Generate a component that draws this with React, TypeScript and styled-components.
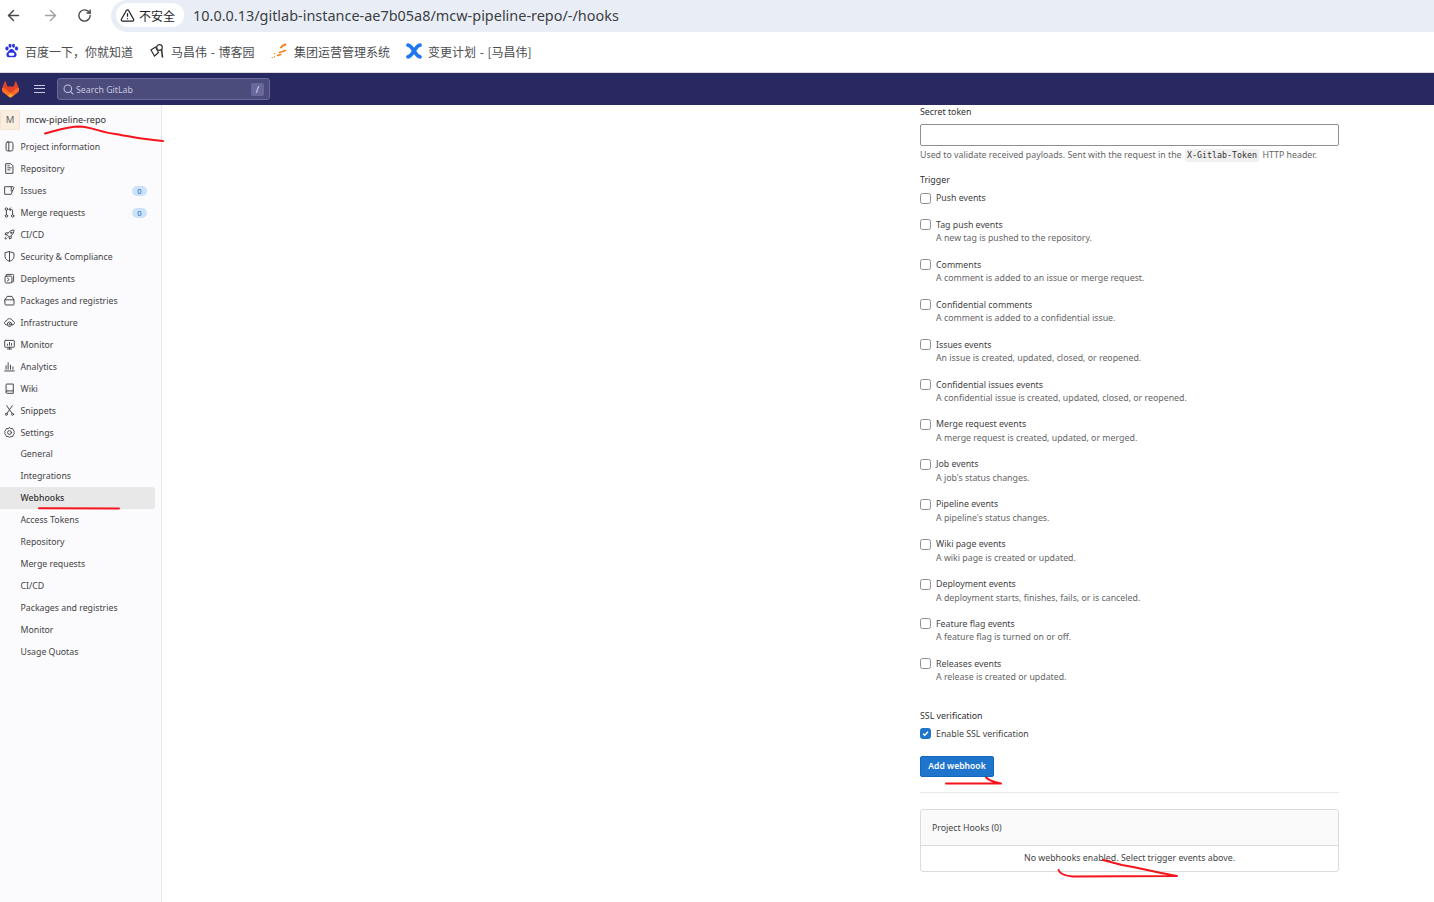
import React from "react";
import styled, { createGlobalStyle } from "styled-components";
import { ArrowLeft, ArrowRight, RotateCw, TriangleAlert } from "lucide-react";

const Global = createGlobalStyle`
  html, body {
    margin: 0;
    height: 902px;
    overflow: hidden;
    background: white;
    font-family: "Noto Sans", "Noto Sans CJK SC", sans-serif;
  }
  * { box-sizing: border-box; }
`;

const Page = styled.div`
  position: relative;
  width: 1434px;
  height: 902px;
  overflow: hidden;
  display: flex;
  flex-direction: column;
`;
const AddressRow = styled.div`
  height: 32px;
  display: flex;
  align-items: center;
  padding-left: 5px;
`;
const NavButton = styled.div<{ $dim?: boolean }>`
  width: 36px;
  display: flex;
  margin-bottom: 2px;
  padding-left: ${(p) => (p.$dim ? "1px" : "0")};
  color: ${(p) => (p.$dim ? "#a0a2a6" : "#45474a")};
`;
const Omnibox = styled.div`
  flex: 1;
  height: 32px;
  margin-left: -2px;
  background: #e9eef6;
  border-radius: 16px 0 0 16px;
  display: flex;
  align-items: center;
  padding: 0 0 2px 5px;
`;
const SecurityChip = styled.div`
  height: 24px;
  width: 68px;
  background: white;
  border-radius: 12px;
  display: flex;
  align-items: center;
  padding-left: 4px;
  gap: 4px;
  font-size: 12px;
  color: #202124;
  font-family: "Noto Sans CJK SC", sans-serif;
`;
const Url = styled.div`
  margin-left: 9px;
  font-family: "Noto Sans", sans-serif;
  font-size: 14.45px;
  color: #3c4043;
`;
const BookmarkBar = styled.div`
  height: 41px;
  display: flex;
  align-items: center;
  padding: 0 0 2px 4px;
  border-bottom: 1px solid #dcdcdc;
`;
const Bookmark = styled.div<{ $width: number }>`
  width: ${(p) => p.$width}px;
  display: flex;
  align-items: center;
  gap: 6px;
  font-family: "Noto Sans CJK SC", sans-serif;
  font-size: 12px;
  word-spacing: 1px;
  color: #4a4c50;
  white-space: nowrap;
`;
const Navbar = styled.div`
  height: 32px;
  background: #292961;
  display: flex;
  align-items: center;
  padding-left: 2px;
`;
const Burger = styled.div`
  margin-left: 15px;
  width: 11px;
  height: 8px;
  border-top: 1.3px solid #c9c9e0;
  border-bottom: 1.3px solid #c9c9e0;
  position: relative;
  &::after {
    content: "";
    position: absolute;
    left: 0;
    right: 0;
    top: 2px;
    border-top: 1.3px solid #c9c9e0;
  }
`;
const SearchBox = styled.div`
  margin-left: 12px;
  width: 213px;
  height: 22px;
  background: #4b4b7c;
  border: 1px solid #6a6a9c;
  border-radius: 3px;
  display: flex;
  align-items: center;
  padding: 0 5px 0 5px;
  gap: 2px;
  color: #c6c6de;
  font-size: 8.8px;
`;
const SearchLabel = styled.span`
  flex: 1;
  padding-top: 1px;
`;
const SlashKey = styled.span`
  width: 13px;
  height: 13px;
  background: #68689a;
  border-radius: 2px;
  text-align: center;
  line-height: 13px;
  font-size: 9px;
  color: #e4e4f0;
`;
const Body = styled.div`
  flex: 1;
  display: flex;
  min-height: 0;
`;
const Sidebar = styled.aside`
  width: 162px;
  background: #fbfafd;
  border-right: 1px solid #e9e9e9;
  padding-top: 5px;
  color: #444;
  font-size: 8.75px;
`;
const ContextRow = styled.div`
  height: 25.5px;
  display: flex;
  align-items: flex-start;
  gap: 6px;
  font-size: 9.15px;
  color: #303030;
`;
const Avatar = styled.div`
  width: 20px;
  height: 20px;
  background: #fbeee0;
  border: 1px solid #f3e4d2;
  border-radius: 2px;
  text-align: center;
  line-height: 18px;
  font-size: 9.5px;
  color: #666;
`;
const ContextName = styled.span`
  line-height: 19px;
`;
const NavRow = styled.div`
  height: 22px;
  display: flex;
  align-items: center;
  padding-left: 4px;
  gap: 5.5px;
  width: 155px;
`;
const IconBox = styled.svg`
  width: 11px;
  height: 11px;
  flex: none;
  fill: none;
  stroke: #444;
  stroke-width: 1.4;
  stroke-linecap: round;
  stroke-linejoin: round;
`;
const NavLabel = styled.span`
  flex: 1;
`;
const Badge = styled.span`
  width: 15px;
  height: 10px;
  margin-right: 8px;
  border-radius: 5px;
  background: #cbe2f9;
  color: #1068bf;
  font-size: 7.5px;
  line-height: 10px;
  text-align: center;
`;
const SubList = styled.div`
  margin-top: -0.5px;
`;
const SubRow = styled.div<{ $active?: boolean }>`
  height: 22px;
  width: 155px;
  display: flex;
  align-items: center;
  padding-left: 20.5px;
  border-radius: 0 3px 3px 0;
  background: ${(p) => (p.$active ? "#e8e8e9" : "transparent")};
  color: ${(p) => (p.$active ? "#303030" : "#444")};
  font-weight: ${(p) => (p.$active ? 500 : 400)};
`;
const Main = styled.main`
  flex: 1;
  padding-left: 758px;
  color: #303030;
  font-size: 8.8px;
`;
const Form = styled.div`
  width: 419px;
`;
const FieldLabel = styled.div<{ $top?: number }>`
  line-height: 14px;
  margin-top: ${(p) => p.$top ?? 0}px;
  color: #303030;
`;
const TextInput = styled.div`
  height: 22px;
  margin-top: 5px;
  border: 1px solid #8f8f8f;
  border-radius: 2px;
  background: white;
`;
const HelpText = styled.div`
  line-height: 13.45px;
  color: #666;
`;
const TokenHelp = styled(HelpText)`
  margin-top: 3px;
  display: flex;
  align-items: center;
  gap: 3px;
`;
const Code = styled.code`
  font-family: "DejaVu Sans Mono", monospace;
  font-size: 8.3px;
  background: #f0f0f0;
  border-radius: 2px;
  color: #303030;
  padding: 0 2.5px;
`;
const TriggerList = styled.div`
  margin-top: 5px;
`;
const CheckRow = styled.div<{ $gap?: number }>`
  display: grid;
  grid-template-columns: 11px 1fr;
  column-gap: 5px;
  align-items: center;
  margin-bottom: ${(p) => p.$gap ?? 13}px;
`;
const CheckLabel = styled.div`
  line-height: 13.45px;
  color: #3f3f3f;
`;
const Box = styled.span<{ $checked?: boolean }>`
  width: 11px;
  height: 11px;
  margin-bottom: 1.5px;
  border-radius: 2.5px;
  border: 1px solid ${(p) => (p.$checked ? "#1f75cb" : "#8f8f8f")};
  background: ${(p) => (p.$checked ? "#1f75cb" : "white")};
  display: flex;
  align-items: center;
  justify-content: center;
`;
const Help = styled(HelpText)`
  grid-column: 2;
`;
const AddButton = styled.div`
  margin-top: 15px;
  width: 74px;
  height: 21px;
  background: #1f75cb;
  border: 1px solid #1068bf;
  border-radius: 2px;
  color: white;
  font-weight: 600;
  font-size: 8.6px;
  line-height: 19px;
  text-align: center;
`;
const Divider = styled.div`
  margin-top: 15px;
  border-top: 1px solid #e9e9e9;
`;
const Card = styled.div`
  margin-top: 16px;
  height: 63px;
  border: 1px solid #dbdbdb;
  border-radius: 3px;
  overflow: hidden;
`;
const CardHeader = styled.div`
  height: 36px;
  background: #fafafa;
  border-bottom: 1px solid #dbdbdb;
  padding-left: 11px;
  line-height: 36px;
  color: #444;
`;
const CardBody = styled.div`
  height: 26px;
  line-height: 25px;
  text-align: center;
  color: #444;
`;
const Scribbles = styled.svg`
  position: absolute;
  left: 0;
  top: 0;
  width: 1434px;
  height: 902px;
  pointer-events: none;
  fill: none;
  stroke: #f5141c;
  stroke-width: 2;
  stroke-linecap: round;
  stroke-linejoin: round;
`;

const icons: Record<string, React.ReactNode> = {
  project: (
    <>
      <rect x="3" y="1.5" width="10" height="13" rx="2.5" />
      <path d="M7 1.8v12.4" />
    </>
  ),
  repository: (
    <>
      <path d="M3 1h7l3 3v11H3z" />
      <path d="M5.5 7h5M5.5 10h3M5.5 4h2" />
    </>
  ),
  issues: (
    <>
      <path d="M1.5 2.5h12l1 1-4 10h-9z" />
      <path d="M10.5 3v6" />
    </>
  ),
  merge: (
    <>
      <circle cx="3.5" cy="3" r="1.8" />
      <circle cx="3.5" cy="13" r="1.8" />
      <circle cx="12.5" cy="13" r="1.8" />
      <path d="M3.5 5v6M12.5 11V5.5a2 2 0 0 0-2-2H8M9.5 1.2 7.5 3.5l2 2" />
    </>
  ),
  cicd: (
    <>
      <path d="M6 6c2-3 5-4.500 8.500-4.500C14.500 5 13 8 10 10L7.500 11.500 4.500 8.500z" />
      <circle cx="10.500" cy="5.500" r="1" />
      <path d="M5 5.500H2.500L1.500 8l2.500.5M10.500 11v2.500L8 14.500 7.500 12M3 11c-1 .8-1.500 2-1.500 3.500 1.500 0 2.700-.5 3.500-1.500" />
    </>
  ),
  security: (
    <>
      <path d="M8 1 14.500 3v5c0 3.500-3 6-6.500 7C4.500 14 1.500 11.500 1.500 8V3z" />
      <path d="M8 1.500V14.500" />
    </>
  ),
  deployments: (
    <>
      <path d="M3 5V3.500A1.500 1.500 0 0 1 4.500 2h8A1.500 1.500 0 0 1 14 3.500v8a1.500 1.500 0 0 1-1.500 1.500H11" />
      <rect x="1.500" y="4.500" width="10" height="10" rx="2" />
      <path d="M5 7.500 7.500 9.500 5 11.500" />
    </>
  ),
  packages: (
    <>
      <path d="M1.500 7h13v6.500a1 1 0 0 1-1 1h-11a1 1 0 0 1-1-1z" />
      <path d="M1.500 7 4.500 2h7l3 5" />
    </>
  ),
  infrastructure: (
    <>
      <path d="M4 11.500C2 11.500.8 10 .8 8.500 .8 7 2 5.800 3.500 5.800 4.200 3.500 6 2.500 8 2.500c2.500 0 4.300 1.700 4.700 3.500 1.500.2 2.500 1.300 2.500 2.700s-1 2.800-3 2.800" />
      <circle cx="8" cy="10.500" r="3.200" />
      <circle cx="8" cy="10.500" r=".8" />
    </>
  ),
  monitor: (
    <>
      <rect x="1" y="2" width="14" height="10" rx="1" />
      <path d="M5 14.500h6M8 12v2.500M5 9V7.500M8 9V5M11 9V6.500" />
    </>
  ),
  analytics: <path d="M1 14.500h14M3 12V7M6 12V2.500M9.500 12V6M13 12V8.500" />,
  wiki: (
    <>
      <path d="M3 13V2.500A1 1 0 0 1 4 1.500h9.500v10H4.500" />
      <path d="M13.500 11.500v3.500H4.500A1.500 1.500 0 0 1 3 13.500a2 2 0 0 1 1.500-2" />
    </>
  ),
  snippets: (
    <>
      <path d="M4 1 11.500 12M12 1 4.500 12" />
      <circle cx="3.500" cy="13.500" r="1.500" />
      <circle cx="12.500" cy="13.500" r="1.500" />
    </>
  ),
  settings: (
    <>
      <path d="M8 1 10 2.300 12.500 2.200 13.500 4.500 15 6.500 14.500 8 15 9.500 13.500 11.500 12.500 13.800 10 13.700 8 15 6 13.700 3.500 13.800 2.500 11.500 1 9.500 1.500 8 1 6.500 2.500 4.500 3.500 2.200 6 2.300z" />
      <circle cx="8" cy="8" r="2.800" />
    </>
  ),
};

const NavIcon = ({ name }: { name: string }) => (
  <IconBox viewBox="0 0 16 16">{icons[name]}</IconBox>
);

const mainNav = [
  { icon: "project", label: "Project information" },
  { icon: "repository", label: "Repository" },
  { icon: "issues", label: "Issues", badge: "0" },
  { icon: "merge", label: "Merge requests", badge: "0" },
  { icon: "cicd", label: "CI/CD" },
  { icon: "security", label: "Security & Compliance" },
  { icon: "deployments", label: "Deployments" },
  { icon: "packages", label: "Packages and registries" },
  { icon: "infrastructure", label: "Infrastructure" },
  { icon: "monitor", label: "Monitor" },
  { icon: "analytics", label: "Analytics" },
  { icon: "wiki", label: "Wiki" },
  { icon: "snippets", label: "Snippets" },
  { icon: "settings", label: "Settings" },
];

const subNav = [
  "General",
  "Integrations",
  "Webhooks",
  "Access Tokens",
  "Repository",
  "Merge requests",
  "CI/CD",
  "Packages and registries",
  "Monitor",
  "Usage Quotas",
];

const triggers = [
  ["Tag push events", "A new tag is pushed to the repository."],
  ["Comments", "A comment is added to an issue or merge request."],
  ["Confidential comments", "A comment is added to a confidential issue."],
  ["Issues events", "An issue is created, updated, closed, or reopened."],
  ["Confidential issues events", "A confidential issue is created, updated, closed, or reopened."],
  ["Merge request events", "A merge request is created, updated, or merged."],
  ["Job events", "A job's status changes."],
  ["Pipeline events", "A pipeline's status changes."],
  ["Wiki page events", "A wiki page is created or updated."],
  ["Deployment events", "A deployment starts, finishes, fails, or is canceled."],
  ["Feature flag events", "A feature flag is turned on or off."],
  ["Releases events", "A release is created or updated."],
];

const BaiduIcon = () => (
  <svg width="15" height="16" viewBox="0 0 15 16">
    <g fill="#2932e1">
      <ellipse cx="3" cy="5.500" rx="1.600" ry="2" />
      <ellipse cx="6" cy="2.800" rx="1.500" ry="2" />
      <ellipse cx="9.500" cy="2.800" rx="1.500" ry="2" />
      <ellipse cx="12.500" cy="5.500" rx="1.600" ry="2" />
      <path d="M7.500 6C5.500 6 4.800 8 3.500 9.200 2 10.500 1.800 13.800 4.500 14.300c1.200.2 2-.3 3-.3s1.800.5 3 .3c2.700-.5 2.500-3.800 1-5.100C10.200 8 9.500 6 7.500 6z" />
    </g>
    <rect x="4.800" y="9.800" width="5.400" height="3" rx="1" fill="#fff" />
  </svg>
);

const BlogIcon = () => (
  <svg width="15" height="16" viewBox="0 0 15 16" fill="none" stroke="#333" strokeWidth="1.200">
    <path d="M1 7 4.500 13 8.500 9.500 5.500 4z" />
    <circle cx="9.500" cy="4.500" r="2.800" />
    <path d="M11.500 6 12.500 14.500" strokeWidth="1.600" />
  </svg>
);

const DashIcon = () => (
  <svg width="17" height="16" viewBox="0 0 17 16" fill="none" stroke="#f0851e" strokeLinecap="round">
    <path d="M10 4.500C11 3 12.500 2 14.500 1.500" strokeWidth="2" />
    <path d="M8.500 9.500 14.500 7.500" strokeWidth="1.800" />
    <path d="M6.500 12.500 10 11.500" strokeWidth="1.400" />
    <path d="M1 14.500h.4M3.500 13.500v.4M3.500 10.500v.4" strokeWidth="1.100" />
  </svg>
);

const CrossIcon = () => (
  <svg width="16" height="16" viewBox="0 0 16 16" fill="none" stroke="#1f78f0" strokeWidth="3.800" strokeLinecap="round">
    <path d="M2 2.200C6.500 2.500 9.500 13.500 14 13.800" />
    <path d="M14 2.200C9.500 2.500 6.500 13.500 2 13.800" />
  </svg>
);

const GitlabLogo = () => (
  <svg width="17" height="17" viewBox="0 0 25 24">
    <path fill="#e24329" d="M24.507 9.500l-.034-.090L21.082.562a.896.896 0 00-1.694.091l-2.290 7.010H7.825L5.535.653a.898.898 0 00-1.694-.090L.451 9.411.416 9.500a6.297 6.297 0 002.090 7.278l.012.010.030.022 5.160 3.867 2.560 1.935 1.554 1.176a1.051 1.051 0 001.268 0l1.555-1.176 2.560-1.935 5.197-3.890.014-.010A6.297 6.297 0 0024.507 9.500z" />
    <path fill="#fc6d26" d="M24.507 9.500l-.034-.090a11.440 11.440 0 00-4.560 2.051l-7.447 5.632 4.742 3.584 5.197-3.890.014-.010A6.297 6.297 0 0024.507 9.500z" />
    <path fill="#fca326" d="M7.707 20.677l2.560 1.935 1.555 1.176a1.051 1.051 0 001.268 0l1.555-1.176 2.560-1.935-4.743-3.584-4.755 3.584z" />
    <path fill="#fc6d26" d="M5.010 11.461a11.430 11.430 0 00-4.560-2.050L.416 9.500a6.297 6.297 0 002.090 7.278l.012.010.030.022 5.160 3.867 4.745-3.584-7.444-5.632z" />
  </svg>
);

const SearchGlyph = () => (
  <svg width="11" height="11" viewBox="0 0 16 16" fill="none" stroke="#c6c6de" strokeWidth="1.500">
    <circle cx="7" cy="7" r="5.500" />
    <path d="M11 11l4 4" />
  </svg>
);

function App() {
  return (
    <Page>
      <Global />
      <AddressRow>
        <NavButton>
          <ArrowLeft size={17} strokeWidth={2} />
        </NavButton>
        <NavButton $dim>
          <ArrowRight size={17} strokeWidth={2} />
        </NavButton>
        <NavButton>
          <RotateCw size={15} strokeWidth={2.200} />
        </NavButton>
        <Omnibox>
          <SecurityChip>
            <TriangleAlert size={15} strokeWidth={2} />
            不安全
          </SecurityChip>
          <Url>10.0.0.13/gitlab-instance-ae7b05a8/mcw-pipeline-repo/-/hooks</Url>
        </Omnibox>
      </AddressRow>
      <BookmarkBar>
        <Bookmark $width={146}>
          <BaiduIcon />
          百度一下，你就知道
        </Bookmark>
        <Bookmark $width={121}>
          <BlogIcon />
          马昌伟 - 博客园
        </Bookmark>
        <Bookmark $width={135}>
          <DashIcon />
          集团运营管理系统
        </Bookmark>
        <Bookmark $width={140}>
          <CrossIcon />
          变更计划 - [马昌伟]
        </Bookmark>
      </BookmarkBar>
      <Navbar>
        <GitlabLogo />
        <Burger />
        <SearchBox>
          <SearchGlyph />
          <SearchLabel>Search GitLab</SearchLabel>
          <SlashKey>/</SlashKey>
        </SearchBox>
      </Navbar>
      <Body>
        <Sidebar>
          <ContextRow>
            <Avatar>M</Avatar>
            <ContextName>mcw-pipeline-repo</ContextName>
          </ContextRow>
          {mainNav.map((item) => (
            <NavRow key={item.label}>
              <NavIcon name={item.icon} />
              <NavLabel>{item.label}</NavLabel>
              {item.badge && <Badge>{item.badge}</Badge>}
            </NavRow>
          ))}
          <SubList>
            {subNav.map((label) => (
              <SubRow key={label} $active={label === "Webhooks"}>
                {label}
              </SubRow>
            ))}
          </SubList>
        </Sidebar>
        <Main>
          <Form>
            <FieldLabel>Secret token</FieldLabel>
            <TextInput />
            <TokenHelp>
              Used to validate received payloads. Sent with the request in the
              <Code>X-Gitlab-Token</Code> HTTP header.
            </TokenHelp>
            <FieldLabel $top={11}>Trigger</FieldLabel>
            <TriggerList>
              <CheckRow>
                <Box />
                <CheckLabel>Push events</CheckLabel>
              </CheckRow>
              {triggers.map(([title, help]) => (
                <CheckRow key={title}>
                  <Box />
                  <CheckLabel>{title}</CheckLabel>
                  <Help>{help}</Help>
                </CheckRow>
              ))}
            </TriggerList>
            <FieldLabel $top={24}>SSL verification</FieldLabel>
            <TriggerList>
              <CheckRow $gap={0}>
                <Box $checked>
                  <svg width="7" height="7" viewBox="0 0 8 8" fill="none" stroke="white" strokeWidth="1.600">
                    <path d="M1.200 4.200 3.200 6 6.800 2" />
                  </svg>
                </Box>
                <CheckLabel>Enable SSL verification</CheckLabel>
              </CheckRow>
            </TriggerList>
            <AddButton>Add webhook</AddButton>
            <Divider />
            <Card>
              <CardHeader>Project Hooks (0)</CardHeader>
              <CardBody>No webhooks enabled. Select trigger events above.</CardBody>
            </Card>
          </Form>
        </Main>
      </Body>
      <Scribbles viewBox="0 0 1434 902">
        <path d="M45 133.500C55 131 68 126.500 79 126.500 92 127 100 132 115 134 128 136 145 140 163 141" />
        <path d="M39 508.300 119 508.500" />
        <path d="M946 783.500H1001M986 777.500C989 781 995 782 1001 783.500" />
        <path d="M1058.500 870C1060 874 1066 876 1073 876.500L1177 876C1160 873 1140 868 1122 865L1103 860" />
      </Scribbles>
    </Page>
  );
}

export default App;
